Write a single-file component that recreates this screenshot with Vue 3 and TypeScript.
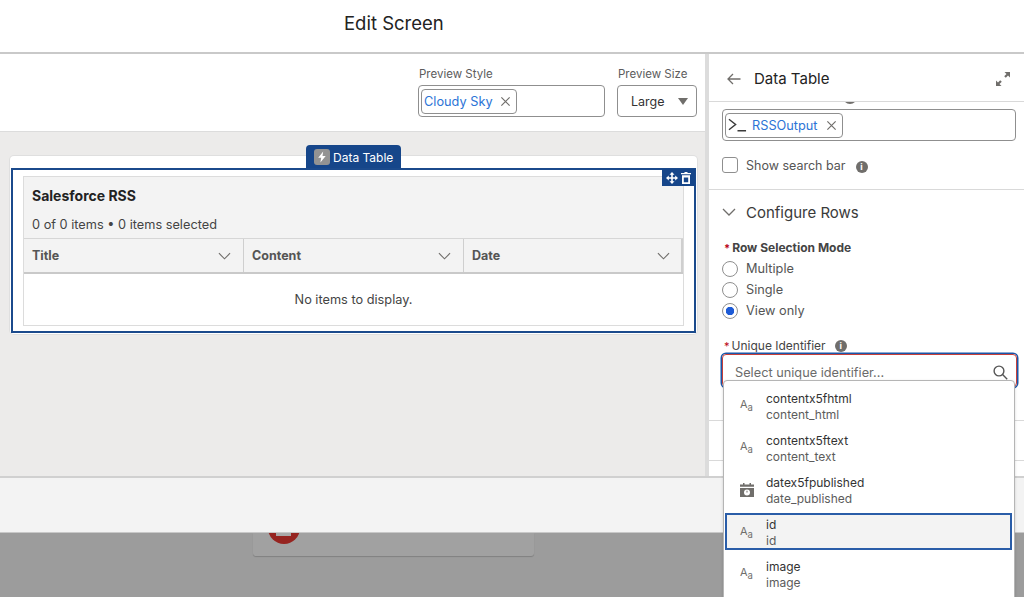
<script setup lang="ts">
interface Field {
  label: string;
  name: string;
  kind: "text" | "date";
  active?: boolean;
}

const fields: Field[] = [
  { label: "contentx5fhtml", name: "content_html", kind: "text" },
  { label: "contentx5ftext", name: "content_text", kind: "text" },
  { label: "datex5fpublished", name: "date_published", kind: "date" },
  { label: "id", name: "id", kind: "text", active: true },
  { label: "image", name: "image", kind: "text" },
];

const columns = ["Title", "Content", "Date"];
const modes = [
  { label: "Multiple", checked: false },
  { label: "Single", checked: false },
  { label: "View only", checked: true },
];
</script>

<template>
  <div class="app">
    <header class="top-bar">Edit Screen</header>

    <div class="workspace">
      <main class="stage">
        <div class="toolbar">
          <div class="tool">
            <label class="tool-label">Preview Style</label>
            <div class="combo style-combo">
              <span class="chip">
                <span class="chip-text">Cloudy Sky</span>
                <svg class="chip-x" viewBox="0 0 12 12"><path d="M1.5 1.5l9 9M10.5 1.5l-9 9" /></svg>
              </span>
            </div>
          </div>
          <div class="tool">
            <label class="tool-label">Preview Size</label>
            <div class="combo size-combo">
              <span>Large</span>
              <span class="caret" />
            </div>
          </div>
        </div>

        <div class="canvas">
          <section class="card">
            <div class="tab">
              <span class="tab-icon">
                <svg viewBox="0 0 10 12"><path d="M6.2.5L1.2 6.800h3L3.400 11.500l5.300-6.600H5.500z" fill="#fff" /></svg>
              </span>
              Data Table
            </div>
            <div class="frame">
              <div class="actions">
                <svg viewBox="0 0 12 12"><path d="M6 0L8.500 2.800H6.800V5.200H9.200V3.500L12 6 9.200 8.500V6.800H6.800V9.200H8.500L6 12 3.500 9.200H5.200V6.800H2.800V8.500L0 6 2.800 3.500V5.200H5.200V2.800H3.500z" fill="#fff" /></svg>
                <svg viewBox="0 0 12 12"><path d="M4.500 0h3v1H11v1.300H1V1h3.500zM2 3.300h8V12H2zm1.800 2.200v4.700h4.400V5.500z" fill="#fff" fill-rule="evenodd" /></svg>
              </div>
              <div class="table">
                <div class="table-head">
                  <h2 class="table-title">Salesforce RSS</h2>
                  <p class="table-count">0 of 0 items • 0 items selected</p>
                </div>
                <div class="columns">
                  <div v-for="col in columns" :key="col" class="column">
                    <span>{{ col }}</span>
                    <svg class="col-chevron" viewBox="0 0 14 8"><path d="M1 1l6 6 6-6" /></svg>
                  </div>
                </div>
                <div class="empty">No items to display.</div>
              </div>
            </div>
          </section>
        </div>
      </main>

      <aside class="panel">
        <div class="panel-head">
          <svg class="back" viewBox="0 0 14 12"><path d="M13.500 6H1M6 1L1 6l5 5" /></svg>
          <span class="panel-title">Data Table</span>
          <svg class="expand" viewBox="0 0 14 14"><path d="M8.500 0H14v5.500L12 3.500 9.800 5.800 8.200 4.200 10.500 2zM5.500 14H0V8.500l2 2 2.200-2.300 1.600 1.600L3.500 12z" /></svg>
        </div>

        <div class="panel-section">
          <div class="combo output-combo">
            <span class="peek-info" />
            <span class="chip output-chip">
              <svg class="prompt" viewBox="0 0 20 14"><path d="M1 1l7 5.500L1 12M10 13h9" /></svg>
              <span class="chip-text">RSSOutput</span>
              <svg class="chip-x" viewBox="0 0 12 12"><path d="M1.500 1.500l9 9M10.500 1.500l-9 9" /></svg>
            </span>
          </div>
          <div class="search-row">
            <span class="checkbox" />
            <span>Show search bar</span>
            <span class="info search-info">i</span>
          </div>
        </div>

        <div class="panel-section rows">
          <div class="section-title">
            <svg class="section-chevron" viewBox="0 0 14 8"><path d="M1 1l6 6 6-6" /></svg>
            Configure Rows
          </div>

          <div class="field-label strong"><em>*</em>Row Selection Mode</div>
          <div v-for="mode in modes" :key="mode.label" class="radio-row">
            <span class="radio" :class="{ checked: mode.checked }" />
            {{ mode.label }}
          </div>

          <div class="field-label identifier"><em>*</em>Unique Identifier<span class="info">i</span></div>
          <div class="picker">
            <div class="picker-input">
              <span>Select unique identifier...</span>
              <svg class="search" viewBox="0 0 15 15"><circle cx="6" cy="6" r="4.900" /><path d="M9.600 9.600l4.600 4.600" /></svg>
            </div>
            <ul class="menu">
              <li v-for="field in fields" :key="field.label" class="menu-item" :class="{ active: field.active }">
                <span v-if="field.kind === 'text'" class="type-text">A<small>a</small></span>
                <svg v-else class="type-date" viewBox="0 0 14 14">
                  <path d="M3 0h1.500v1.500h5V0H11v1.500h3v2.300H0V1.500h3zM0 5h14v9H0zm7 1.500a3 3 0 100 6 3 3 0 000-6zm-.5 1.200h1v1.800H6.500z" fill-rule="evenodd" />
                </svg>
                <span class="item-text">
                  <span class="item-label">{{ field.label }}</span>
                  <span class="item-name">{{ field.name }}</span>
                </span>
              </li>
            </ul>
          </div>
        </div>
        <div class="panel-line" />
        <div class="panel-line" />
      </aside>
    </div>

    <footer class="bottom-bar" />

    <div class="backdrop">
      <div class="ghost-card"><span class="stop" /></div>
    </div>
  </div>
</template>

<style>
html,
body {
  margin: 0;
  background: #fff;
}
</style>

<style scoped>
.app {
  width: 1024px;
  height: 597px;
  overflow: hidden;
  display: flex;
  flex-direction: column;
  font-family: Inter, "Liberation Sans", sans-serif;
  color: #444;
  font-size: 12.750px;
}

.top-bar {
  height: 54px;
  flex: none;
  box-sizing: border-box;
  padding: 12px 0 0 344px;
  font-size: 18.500px;
  line-height: 22px;
  color: #222;
  border-bottom: 2px solid #c9c9c9;
}

.workspace {
  height: 422px;
  flex: none;
  display: flex;
}

.stage {
  width: 705px;
  display: flex;
  flex-direction: column;
}

.toolbar {
  height: 78px;
  flex: none;
  box-sizing: border-box;
  display: flex;
  justify-content: flex-end;
  gap: 12px;
  padding: 13px 8px 0 0;
  border-bottom: 1px solid #dcdcdc;
}

.tool-label {
  display: block;
  font-size: 11.500px;
  line-height: 15px;
  color: #5c5c5c;
  margin: 0 0 3px 1px;
}

.combo {
  position: relative;
  box-sizing: border-box;
  height: 32px;
  border: 1px solid #8f8f8f;
  border-radius: 4px;
  background: #fff;
  display: flex;
  align-items: center;
}

.style-combo {
  width: 187px;
  padding-left: 2px;
}

.size-combo {
  width: 80px;
  padding: 0 8px 0 13px;
  justify-content: space-between;
  color: #333;
  font-size: 12.500px;
}

.caret {
  width: 0;
  height: 0;
  border-left: 5.500px solid transparent;
  border-right: 5.500px solid transparent;
  border-top: 7px solid #706e6b;
}

.chip {
  box-sizing: border-box;
  height: 25px;
  width: 96px;
  border: 1px solid #8f8f8f;
  border-radius: 4px;
  display: flex;
  align-items: center;
  padding: 0 5px 0 2px;
  justify-content: space-between;
}

.chip-text {
  color: #2c74d6;
  font-size: 12.750px;
  white-space: nowrap;
}

.chip-x {
  width: 11px;
  height: 11px;
  flex: none;
  fill: none;
  stroke: #706e6b;
  stroke-width: 1.300;
}

.canvas {
  flex: 1;
  background: #ecebea;
  padding: 24px 8px 0 10px;
}

.card {
  position: relative;
  width: 687px;
  height: 178px;
  box-sizing: border-box;
  padding-top: 12px;
  background: #fff;
  border-radius: 4px;
  box-shadow: 0 0 0 1px #dfdfdf;
}

.tab {
  position: absolute;
  left: 296px;
  top: -11px;
  width: 95px;
  height: 24px;
  box-sizing: border-box;
  padding-left: 8px;
  display: flex;
  align-items: center;
  gap: 3px;
  background: #16468a;
  border-radius: 4px 4px 0 0;
  color: #fff;
  font-size: 12px;
}

.tab-icon {
  width: 16px;
  height: 16px;
  border-radius: 3px;
  background: #939393;
  display: flex;
  align-items: center;
  justify-content: center;
}

.tab-icon svg {
  width: 10px;
  height: 12px;
}

.frame {
  position: relative;
  box-sizing: border-box;
  margin-left: 1px;
  width: 685px;
  height: 165px;
  border: 2px solid #1b4a8c;
  padding: 6px 10px 0 10px;
}

.actions {
  position: absolute;
  top: -1px;
  right: -1px;
  width: 33px;
  height: 17px;
  box-sizing: border-box;
  background: #16468a;
  display: flex;
  align-items: center;
  justify-content: center;
  gap: 2px;
}

.actions svg {
  width: 12px;
  height: 12px;
}

.table {
  box-sizing: border-box;
  border: 1px solid #dcdcdc;
  height: 150px;
}

.table-head {
  height: 61px;
  box-sizing: border-box;
  padding: 10px 8px 0;
  background: #f3f3f3;
}

.table-title {
  margin: 0;
  font-size: 14px;
  line-height: 18px;
  font-weight: 700;
  color: #222;
}

.table-count {
  margin: 12px 0 0;
  font-size: 12.750px;
  line-height: 16px;
  color: #444;
}

.columns {
  display: grid;
  grid-template-columns: 220px 220px 219px;
  height: 36px;
  box-sizing: border-box;
  background: #f3f3f3;
  border-top: 1px solid #d6d6d6;
  border-bottom: 2px solid #c9c9c9;
}

.column {
  display: flex;
  align-items: center;
  justify-content: space-between;
  padding: 0 12px 0 8px;
  font-weight: 700;
  font-size: 12.500px;
  color: #555;
  border-right: 1px solid #cfcfcf;
}

.column:last-child {
  border-right-width: 2px;
  padding-right: 11px;
}

.col-chevron {
  width: 13px;
  height: 8px;
  fill: none;
  stroke: #706e6b;
  stroke-width: 1.200;
}

.empty {
  text-align: center;
  line-height: 16px;
  padding-top: 18px;
  color: #444;
}

.panel {
  width: 319px;
  box-sizing: border-box;
  flex: none;
  position: relative;
  background: #fff;
  border-left: 4px solid #dcdcdc;
}

.panel-head {
  position: relative;
  z-index: 1;
  box-sizing: border-box;
  height: 48px;
  background: #fff;
  border-bottom: 1px solid #d9d9d9;
  display: flex;
  align-items: center;
  padding: 2px 14px 0 18px;
}

.back {
  width: 14px;
  height: 12px;
  fill: none;
  stroke: #706e6b;
  stroke-width: 1.300;
  margin-right: 13px;
}

.panel-title {
  flex: 1;
  font-size: 15px;
  color: #222;
}

.expand {
  width: 14px;
  height: 14px;
  fill: #706e6b;
}

.panel-section {
  border-bottom: 1px solid #d9d9d9;
  padding: 7px 8px 0 13px;
  height: 88px;
  box-sizing: border-box;
}

.output-combo {
  width: 294px;
}

.peek-info {
  position: absolute;
  left: 120px;
  top: -20px;
  width: 14px;
  height: 14px;
  border-radius: 50%;
  background: #706e6b;
}

.output-chip {
  width: 118px;
  margin-left: 2px;
  padding: 0 5px 0 2px;
  justify-content: flex-start;
}

.output-chip .chip-text {
  margin: 0 8px 0 5px;
}

.prompt {
  width: 19px;
  height: 14px;
  flex: none;
  fill: none;
  stroke: #3a3a3a;
  stroke-width: 1.500;
}

.search-row {
  display: flex;
  align-items: center;
  margin-top: 16px;
  font-size: 12.500px;
  color: #555;
}

.checkbox {
  width: 16px;
  height: 16px;
  box-sizing: border-box;
  border: 1px solid #8f8f8f;
  border-radius: 3px;
  margin-right: 8px;
}

.info {
  width: 12px;
  height: 12px;
  border-radius: 50%;
  background: #706e6b;
  color: #fff;
  font-size: 9px;
  font-weight: 700;
  line-height: 12px;
  text-align: center;
  margin-left: 9px;
}

.search-info {
  margin: 3px 0 0 10px;
}

.rows {
  height: 231px;
  position: relative;
  padding-top: 0;
}

.section-title {
  display: flex;
  align-items: center;
  gap: 10px;
  height: 44px;
  font-size: 15px;
  color: #3a3a3a;
}

.section-chevron {
  width: 14px;
  height: 8px;
  fill: none;
  stroke: #706e6b;
  stroke-width: 1.300;
}

.field-label {
  font-size: 12px;
  line-height: 16px;
  color: #444;
  display: flex;
  align-items: center;
}

.field-label em {
  color: #ba0517;
  font-style: normal;
  margin: 0 2px 0 2px;
  font-size: 11px;
}

.strong {
  font-weight: 700;
  margin: 6px 0 2px;
}

.radio-row {
  display: flex;
  align-items: center;
  gap: 8px;
  height: 21px;
  color: #555;
}

.radio {
  width: 16px;
  height: 16px;
  box-sizing: border-box;
  border: 1px solid #8f8f8f;
  border-radius: 50%;
  background: #fff;
}

.radio.checked {
  background: radial-gradient(circle, #1d5bd6 0 4px, #fff 4.500px);
}

.identifier {
  margin-top: 17px;
}

.picker {
  position: relative;
  margin: 0 -1px 0 0;
  width: 295px;
}

.picker-input {
  box-sizing: border-box;
  height: 33px;
  border-radius: 4px;
  border: 1px solid #c8403a;
  box-shadow: 0 0 0 1.500px #1a56a8;
  display: flex;
  align-items: center;
  justify-content: space-between;
  padding: 3px 8px 0 12px;
  color: #6b6b6b;
}

.search {
  width: 15px;
  height: 15px;
  fill: none;
  stroke: #555;
  stroke-width: 1.400;
}

.menu {
  position: absolute;
  z-index: 3;
  top: 26px;
  left: 1px;
  width: 292px;
  height: 240px;
  box-sizing: border-box;
  margin: 0;
  padding: 0 0 0 1px;
  list-style: none;
  background: #fff;
  border: 1px solid #b5b5b5;
  border-radius: 4px 4px 0 0;
  box-shadow: 0 1px 3px rgba(0, 0, 0, 0.16);
}

.menu-item {
  box-sizing: border-box;
  width: 287px;
  height: 42px;
  padding: 9px 0 0 15px;
  display: flex;
  align-items: center;
  gap: 12px;
}

.menu-item.active {
  background: #f3f3f3;
  box-shadow: inset 0 0 0 2px #2a5da8;
  height: 37px;
  margin: 6px 0 -1px;
  padding: 3px 0 0 15px;
}

.type-text {
  width: 14px;
  margin-top: -4px;
  color: #706e6b;
  font-size: 11px;
  line-height: 14px;
}

.type-text small {
  font-size: 9.500px;
  position: relative;
  top: 3px;
}

.type-date {
  width: 14px;
  height: 14px;
  margin-top: -1px;
  fill: #706e6b;
}

.item-text {
  display: flex;
  flex-direction: column;
  font-size: 12px;
  line-height: 16px;
}

.item-label {
  color: #333;
}

.item-name {
  color: #5c5c5c;
}

.panel-line {
  height: 39px;
  border-bottom: 1px solid #d9d9d9;
}

.bottom-bar {
  position: relative;
  z-index: 1;
  height: 57px;
  flex: none;
  box-sizing: border-box;
  background: #f3f3f3;
  border-top: 2px solid #d0d0d0;
  border-bottom: 1px solid #c8c8c8;
}

.backdrop {
  flex: 1;
  background: #9c9c9c;
  padding-left: 253px;
}

.ghost-card {
  position: relative;
  width: 281px;
  height: 23px;
  background: #a1a1a1;
  border-radius: 0 0 3px 3px;
  box-shadow: 0 1px 1px rgba(0, 0, 0, 0.18);
}

.stop {
  position: absolute;
  left: 15px;
  top: -21px;
  width: 32px;
  height: 32px;
  border-radius: 50%;
  background: #962420;
}

.stop::after {
  content: "";
  position: absolute;
  left: 8px;
  top: 10px;
  width: 15px;
  height: 14px;
  background: #a9a9a9;
}
</style>
